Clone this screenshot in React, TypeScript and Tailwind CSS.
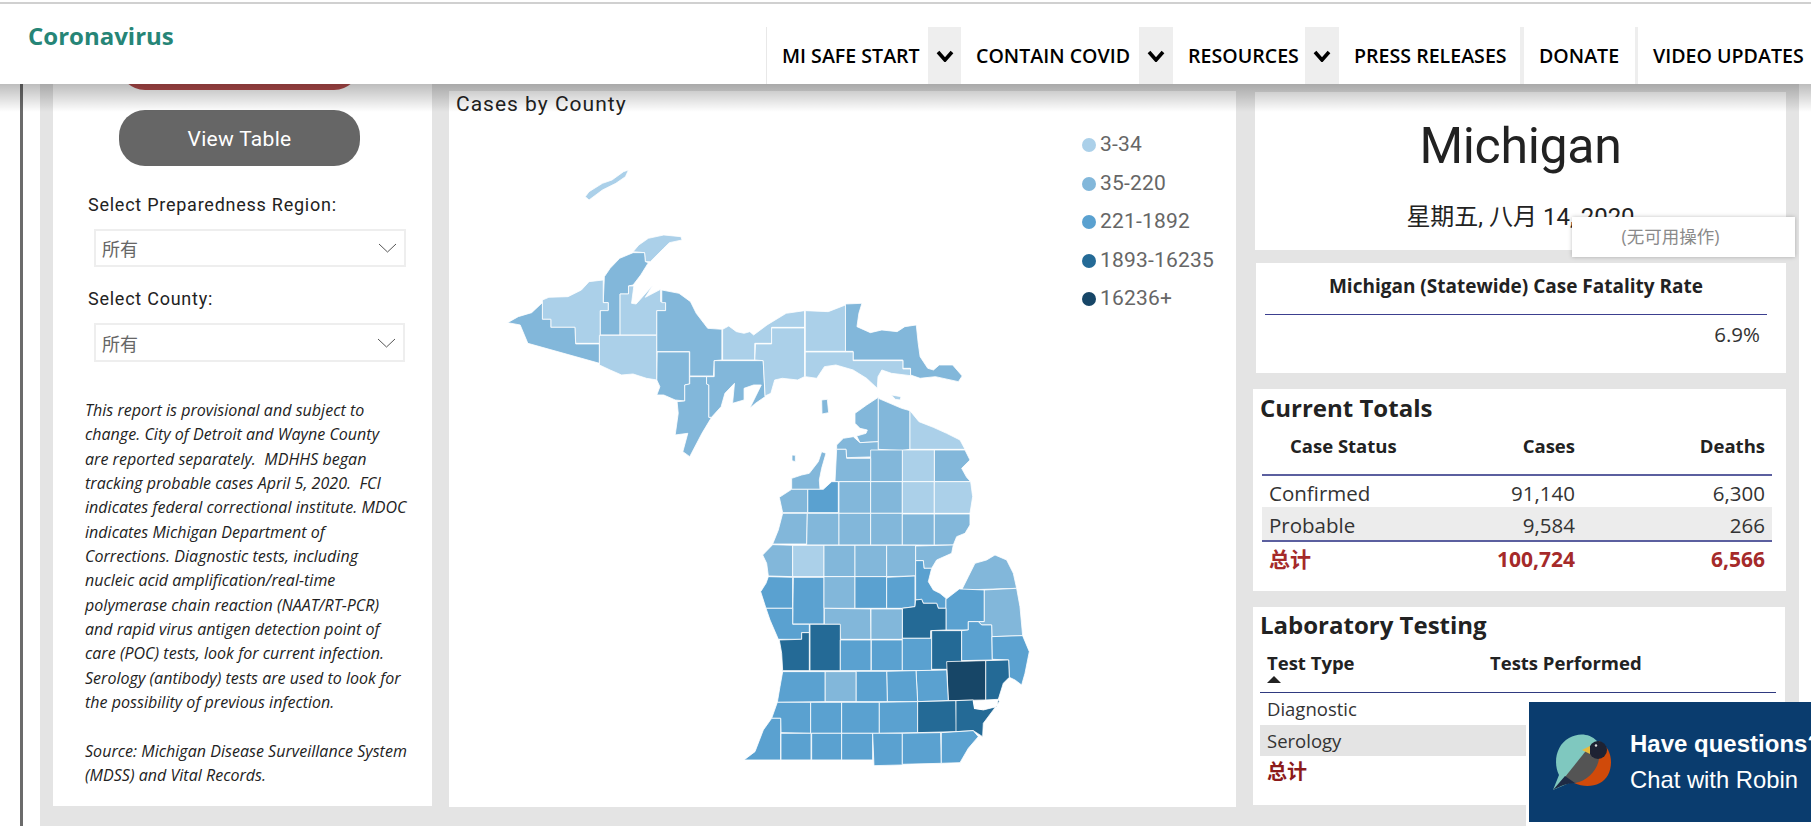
import React from "react";

const L1 = "#abd0e9";
const L2 = "#82b7da";
const L3 = "#5aa1d0";
const L4 = "#246a96";
const L5 = "#174667";

// upper peninsula, traced from a crop stretched 2.613 x 3
const upper: [string, string][] = [
  [L1, "275,140 285,125 320,100 345,90 375,65 388,60 380,80 355,100 320,120 285,150"],
  [L1, "400,305 415,285 440,265 480,255 525,260 528,270 495,278 480,295 445,335 432,335 430,308"],
  [L2, "400,308 430,308 432,335 440,338 420,375 400,405 388,408 388,432 366,432 366,555 314,555 314,482 335,480 335,458 322,458 325,380 340,355 365,325"],
  [L1, "322,390 322,458 335,458 335,482 314,482 314,580 250,580 248,532 185,532 185,508 163,508 163,450 180,442 230,440 265,420 285,395"],
  [L2, "163,458 163,508 185,508 185,532 248,532 250,582 312,582 312,640 125,580 105,525 72,518 100,500 135,488"],
  [L1, "366,432 388,432 388,408 402,408 396,460 408,462 425,440 452,405 432,442 472,418 472,455 485,458 485,482 462,482 462,555 366,555"],
  [L1, "312,556 462,556 462,690 435,685 400,672 370,675 340,660 312,645"],
  [L2, "475,420 520,430 550,455 565,490 585,520 595,535 632,538 632,630 612,632 610,678 548,678 548,605 462,605 462,482 485,482 485,458 475,458"],
  [L2, "463,606 547,606 547,702 535,705 535,753 510,750 480,735 462,735 470,710 462,690"],
  [L2, "548,680 592,680 592,702 598,705 598,802 605,802 580,850 548,920 530,905 543,850 510,855 518,790 515,755 535,753 535,705 548,702"],
  [L2, "612,632 740,632 745,740 720,760 705,775 735,705 715,705 690,715 690,750 660,760 665,700 640,730 630,770 605,802 598,802 598,705 592,702 592,680 612,680"],
  [L1, "634,538 650,528 670,545 690,550 705,545 715,555 750,525 800,490 848,482 848,532 762,532 762,580 718,580 718,630 634,630"],
  [L1, "720,582 762,582 762,534 848,534 848,680 830,690 790,685 770,690 760,730 745,738 740,632 718,630"],
  [L1, "850,482 910,485 955,465 955,604 850,604"],
  [L2, "955,462 998,460 990,490 985,530 1020,548 1050,540 1090,545 1110,530 1140,525 1145,580 1150,620 1170,655 1185,660 1200,645 1235,645 1260,678 1250,695 1190,680 1150,685 1125,675 1125,655 1105,655 1105,630 975,630 975,604 955,604"],
  [L1, "850,606 975,606 975,632 1105,632 1105,657 1125,657 1125,677 1075,670 1050,660 1040,680 1038,715 1010,685 975,660 930,645 900,650 880,685 850,680"],
  [L1, "1075,735 1100,740 1098,750 1085,748"],
];

// lower peninsula, traced from a 3 x 3 crop
const lower: [string, string][] = [
  [L2, "305,30 322,28 326,68 306,72"],
  [L2, "216,195 226,196 226,215 216,212"],
  [L2, "475,22 440,45 405,70 405,100 420,115 442,120 438,130 410,138 420,158 475,155"],
  [L2, "400,140 370,145 350,165 350,178 378,178 380,203 475,200 475,155 420,158"],
  [L2, "475,25 510,40 545,55 570,62 570,178 545,182 475,178"],
  [L1, "570,62 597,95 640,112 680,130 720,150 735,178 570,178"],
  [L2, "643,180 735,180 750,210 725,235 740,262 752,275 643,275"],
  [L1, "547,180 643,180 643,275 547,275"],
  [L2, "452,180 547,180 547,275 452,275"],
  [L2, "350,178 378,178 380,205 452,205 452,275 360,275 345,275"],
  [L2, "215,265 245,255 268,250 295,215 305,185 318,190 305,235 298,270 300,298 215,298"],
  [L3, "263,298 310,298 335,275 355,275 355,368 263,368"],
  [L2, "357,275 452,275 452,370 357,370"],
  [L2, "452,275 547,275 547,370 452,370"],
  [L1, "547,275 643,275 643,370 547,370"],
  [L1, "643,275 752,275 758,320 750,370 643,370"],
  [L2, "215,298 263,298 263,368 188,368 178,322"],
  [L2, "188,370 262,370 260,462 158,462 175,420"],
  [L2, "262,370 357,370 357,465 260,465"],
  [L2, "357,370 452,370 452,465 357,465"],
  [L2, "452,370 547,370 547,465 452,465"],
  [L2, "547,372 643,372 643,465 547,465"],
  [L2, "643,372 750,372 750,405 735,430 710,440 700,465 643,465"],
  [L2, "158,464 218,466 218,560 145,558 140,520 128,495"],
  [L1, "218,466 312,466 312,560 218,560"],
  [L2, "312,466 405,466 405,560 312,560"],
  [L2, "405,466 500,466 500,560 405,560"],
  [L2, "500,466 587,466 587,558 500,560"],
  [L2, "587,468 700,465 695,490 650,510 635,535 612,535 610,512 587,512"],
  [L3, "145,560 218,562 218,655 138,655 122,605 138,580"],
  [L3, "220,562 312,562 312,702 218,702"],
  [L2, "312,560 405,560 405,655 312,655"],
  [L3, "405,560 500,560 500,655 405,655"],
  [L3, "500,562 585,558 585,650 545,655 500,655"],
  [L3, "587,512 610,512 612,535 635,535 625,575 640,600 660,610 678,625 678,655 655,655 650,640 610,640 605,628 587,630 587,558"],
  [L2, "725,600 745,560 765,520 800,510 825,495 860,510 880,550 890,595 795,598"],
  [L3, "718,597 793,600 793,695 745,695 745,720 678,720 678,628"],
  [L2, "793,600 890,595 900,650 908,737 816,740 815,705 785,705 775,695 793,695"],
  [L4, "587,630 605,628 610,640 650,640 655,655 678,655 678,720 632,722 632,745 547,745 547,655 585,650"],
  [L2, "313,655 452,657 453,748 362,748 360,703 313,703"],
  [L2, "453,657 547,657 547,748 453,748"],
  [L3, "138,655 218,655 218,703 268,703 268,728 245,728 245,748 175,748 150,690"],
  [L4, "178,750 245,748 245,728 268,728 268,842 188,842 185,790"],
  [L4, "270,703 361,703 361,842 270,842"],
  [L3, "361,750 453,750 453,842 361,842"],
  [L3, "454,750 547,750 547,842 454,842"],
  [L3, "547,745 635,745 635,842 547,842"],
  [L4, "635,722 725,722 725,838 635,838"],
  [L3, "745,695 775,695 785,705 815,705 817,810 725,812 725,722 745,720"],
  [L3, "816,740 908,737 928,785 915,850 905,885 885,870 868,862 866,810 817,808"],
  [L4, "797,812 866,810 868,862 850,880 835,928 797,930"],
  [L5, "680,815 797,812 797,930 685,932"],
  [L3, "588,842 680,840 685,932 593,935"],
  [L3, "500,844 588,842 593,935 502,935"],
  [L3, "408,844 500,844 502,935 408,935"],
  [L2, "315,845 408,845 408,935 315,935"],
  [L3, "188,845 315,845 315,935 172,937 180,890"],
  [L3, "172,937 272,937 272,1030 183,1028 182,985 155,985"],
  [L3, "272,937 365,937 365,1030 272,1030"],
  [L3, "365,937 478,937 478,1030 365,1030"],
  [L3, "478,937 593,935 593,1028 478,1030"],
  [L4, "593,935 708,932 710,1025 593,1028"],
  [L4, "708,932 760,930 765,955 790,960 830,950 835,928 838,935 820,960 790,1000 788,1040 760,1022 708,1025"],
  [L3, "155,985 182,985 182,1110 72,1110 105,1085 130,1020"],
  [L3, "183,1030 273,1030 273,1110 183,1110"],
  [L3, "275,1030 365,1030 365,1110 275,1110"],
  [L3, "365,1030 458,1030 458,1110 365,1110"],
  [L3, "458,1030 547,1030 547,1125 462,1127"],
  [L3, "547,1030 662,1028 664,1120 547,1123"],
  [L3, "664,1028 760,1022 775,1040 745,1075 720,1118 664,1120"],
];

const legend = [
  [L1, "3-34"],
  [L2, "35-220"],
  [L3, "221-1892"],
  [L4, "1893-16235"],
  [L5, "16236+"],
];

const County = ({ fill, points }: { fill: string; points: string }) => (
  <polygon
    points={points}
    fill={fill}
    stroke="#ffffff"
    strokeOpacity={0.8}
    strokeWidth={1}
    vectorEffect="non-scaling-stroke"
    strokeLinejoin="round"
  />
);

const MichiganMap = () => (
  <svg className="absolute left-0 top-0 h-[716px] w-[787px]" viewBox="449 91 787 716">
    <g transform="translate(480 150) scale(0.3827 0.3333)">
      {upper.map(([fill, points]) => (
        <County key={points} fill={fill} points={points} />
      ))}
    </g>
    <g transform="translate(720 390) scale(0.3333)">
      {lower.map(([fill, points]) => (
        <County key={points} fill={fill} points={points} />
      ))}
      <path
        d="M760 932 L764 955 L785 958 L790 945 L810 950 L832 945"
        fill="none"
        stroke="#ffffff"
        strokeWidth={4}
      />
    </g>
  </svg>
);

const Chevron = () => (
  <svg width="18" height="12" viewBox="0 0 18 12">
    <path d="M2 2 L9 10 L16 2" fill="none" stroke="#000000" strokeWidth={3.6} />
  </svg>
);

const NavLink = ({ label, width }: { label: string; width: string }) => (
  <div className={`flex items-center pl-[15px] ${width}`}>
    <span className="text-[19.6px] font-semibold text-black whitespace-nowrap">{label}</span>
  </div>
);

const NavCaret = ({ width }: { width: string }) => (
  <div className={`flex items-center justify-center bg-[#eeeeee] ${width}`}>
    <Chevron />
  </div>
);

const SelectBox = ({ extra }: { extra: string }) => (
  <div className={`ml-[41px] flex items-center justify-between border-2 border-[#eeeeee] pl-[6px] pr-[7px] ${extra}`}>
    <span className="pt-[3px] text-[18px] text-[#666666]">所有</span>
    <svg width="19" height="10" viewBox="0 0 19 10">
      <path d="M1 1 L9.5 9 L18 1" fill="none" stroke="#555555" strokeWidth={1} />
    </svg>
  </div>
);

const Bird = () => (
  <svg className="shrink-0" width="58" height="58" viewBox="0 0 58 58">
    <path d="M0 57 L6 42 C0 30 3 12 16 5 C25 0 36 0 44 8 L30 44 Z" fill="#7fc8bf" />
    <path d="M46 8 C58 14 61 30 55 42 C49 53 34 56 21 50 C34 46 44 30 46 8 Z" fill="#d04a0a" />
    <path d="M36 14 L46 26 C44 38 34 48 22 50 C18 50 14 46 12 44 Z" fill="#545454" />
    <path d="M0 57 L12 43 L22 50 C14 50 8 53 0 57 Z" fill="#1e2a44" />
    <circle cx="45" cy="17" r="9" fill="#1e2233" />
    <circle cx="43" cy="12.5" r="1.2" fill="#dddddd" />
    <path d="M29 17 L37 13 L37 21 Z" fill="#e9b93c" />
  </svg>
);

const App = () => {
  return (
    <div className="relative h-[826px] w-[1811px] overflow-hidden bg-white font-['Open_Sans','Noto_Sans_CJK_SC',sans-serif]">
      <div className="mt-[2px] h-[2px] bg-[#d0d0d0]" />

      {/* header */}
      <div className="relative z-20 flex h-[80px] justify-between bg-white">
        <div className="pl-[28px] pt-[18px] text-[24px] leading-[28px] font-bold text-[#268577]">Coronavirus</div>
        <div className="mt-[23px] flex h-[57px] border-l border-[#e8e8e8]">
          <NavLink label="MI SAFE START" width="w-[161px]" />
          <NavCaret width="w-[33px]" />
          <NavLink label="CONTAIN COVID" width="w-[178px]" />
          <NavCaret width="w-[34px]" />
          <NavLink label="RESOURCES" width="w-[132px]" />
          <NavCaret width="w-[34px]" />
          <NavLink label="PRESS RELEASES" width="w-[181px]" />
          <div className="w-[4px] bg-[#eeeeee]" />
          <NavLink label="DONATE" width="w-[111px]" />
          <div className="w-[3px] bg-[#eeeeee]" />
          <NavLink label="VIDEO UPDATES" width="w-[173px]" />
        </div>
      </div>
      <div className="absolute left-0 right-0 top-[84px] z-10 h-[28px] bg-gradient-to-b from-black/[0.26] to-transparent" />

      {/* body */}
      <div className="flex h-[742px]">
        <div className="w-[40px] pl-[20px]">
          <div className="h-full w-[3px] bg-[#6b6b6b]" />
        </div>
        <div className="flex h-full w-[1759px] bg-[#e4e4e4] pl-[13px]">
          {/* left panel */}
          <div className="h-[722px] w-[379px] overflow-hidden bg-white">
            <div className="-mt-[50px] ml-[66px] h-[56px] w-[241px] rounded-[26px] bg-[#b54c4c]" />
            <div className="ml-[66px] mt-[20px] flex h-[56px] w-[241px] items-center justify-center rounded-[26px] bg-[#666666] pt-[4px] font-['Roboto',sans-serif] text-[21px] tracking-[0.3px] text-white">
              View Table
            </div>
            <div className="ml-[35px] mt-[27px] font-['Roboto',sans-serif] text-[18px] leading-[24px] tracking-[0.75px] text-[#222222]">Select Preparedness Region:</div>
            <SelectBox extra="mt-[12px] h-[38px] w-[312px]" />
            <div className="ml-[35px] mt-[20px] font-['Roboto',sans-serif] text-[18px] leading-[24px] tracking-[0.75px] text-[#222222]">Select County:</div>
            <SelectBox extra="mt-[12px] h-[39px] w-[311px]" />
            <div className="ml-[32px] mt-[36px] w-[345px] text-[16px] italic leading-[24.35px] tracking-[0.03px] text-[#222222]">
              <p>This report is provisional and subject to</p>
              <p>change. City of Detroit and Wayne County</p>
              <p>are reported separately.&nbsp; MDHHS began</p>
              <p>tracking probable cases April 5, 2020.&nbsp; FCI</p>
              <p>indicates federal correctional institute. MDOC</p>
              <p>indicates Michigan Department of</p>
              <p>Corrections. Diagnostic tests, including</p>
              <p>nucleic acid amplification/real-time</p>
              <p>polymerase chain reaction (NAAT/RT-PCR)</p>
              <p>and rapid virus antigen detection point of</p>
              <p>care (POC) tests, look for current infection.</p>
              <p>Serology (antibody) tests are used to look for</p>
              <p>the possibility of previous infection.</p>
              <p className="mt-[24.35px]">Source: Michigan Disease Surveillance System</p>
              <p>(MDSS) and Vital Records.</p>
            </div>
          </div>

          {/* map panel */}
          <div className="relative ml-[17px] mt-[7px] h-[716px] w-[787px] bg-white">
            <MichiganMap />
            <div className="relative pl-[7px] font-['Roboto','Noto_Sans',sans-serif] text-[21px] leading-[26px] tracking-[1px] text-[#222222]">
              Cases by County
            </div>
            <div className="absolute left-[633px] top-[41px] flex flex-col gap-[12.5px]">
              {legend.map(([color, label]) => (
                <div key={label} className="flex h-[26px] items-center gap-[4px]">
                  <div className="h-[14px] w-[14px] rounded-full" style={{ backgroundColor: color }} />
                  <span className="font-['Roboto','Noto_Sans',sans-serif] text-[21px] tracking-[0.2px] text-[#666666]">{label}</span>
                </div>
              ))}
            </div>
          </div>

          {/* right column */}
          <div className="ml-[17px] flex w-[533px] flex-col pt-[8px]">
            <div className="ml-[2px] flex h-[158px] w-[531px] flex-col items-center bg-white font-['Roboto','Noto_Sans','Noto_Sans_CJK_SC',sans-serif] text-[#222222]">
              <div className="mt-[19px] text-[50px] leading-[70px] tracking-[-0.3px]">Michigan</div>
              <div className="mt-[20px] text-[24px] leading-[32px]">星期五, 八月 14, 2020</div>
            </div>
            <div className="ml-[3px] mt-[13px] h-[110px] w-[530px] bg-white">
              <div className="pr-[10px] pt-[10px] text-center text-[19px] font-bold leading-[26px] text-[#222222]">
                Michigan (Statewide) Case Fatality Rate
              </div>
              <div className="ml-[9px] mt-[15px] h-[1px] w-[502px] bg-[#3c3f8f]" />
              <div className="pr-[26px] pt-[5px] text-right text-[20.5px] leading-[28px] text-[#333333]">6.9%</div>
            </div>

            <div className="mt-[16px] h-[202px] bg-white">
              <div className="pl-[7px] pt-[3px] text-[24px] font-bold leading-[32px] text-[#222222]">Current Totals</div>
              <div className="ml-[9px] w-[510px]">
                <div className="grid h-[52px] grid-cols-[141px_179px_190px] items-start border-b-2 border-[#5b5f9f] pt-[9px] text-[18.5px] font-bold leading-[26px] text-[#222222]">
                  <div className="pl-[28px]">Case Status</div>
                  <div className="pr-[7px] text-right">Cases</div>
                  <div className="pr-[7px] text-right">Deaths</div>
                </div>
                <div className="grid h-[31px] grid-cols-[141px_179px_190px] items-center pt-[2px] text-[20.5px] text-[#333333]">
                  <div className="pl-[7px]">Confirmed</div>
                  <div className="pr-[7px] text-right">91,140</div>
                  <div className="pr-[7px] text-right">6,300</div>
                </div>
                <div className="grid h-[35px] grid-cols-[141px_179px_190px] items-center border-b-2 border-[#5b5f9f] bg-[#ececec] pt-[3px] text-[20.5px] text-[#333333]">
                  <div className="pl-[7px]">Probable</div>
                  <div className="pr-[7px] text-right">9,584</div>
                  <div className="pr-[7px] text-right">266</div>
                </div>
                <div className="grid h-[34px] grid-cols-[141px_179px_190px] items-center pt-[1px] text-[21px] font-bold text-[#a52a2a]">
                  <div className="pl-[7px]">总计</div>
                  <div className="pr-[7px] text-right">100,724</div>
                  <div className="pr-[7px] text-right">6,566</div>
                </div>
              </div>
            </div>

            <div className="mt-[16px] h-[198px] w-[532px] bg-white">
              <div className="pl-[7px] pt-[2px] text-[24px] font-bold leading-[32px] text-[#222222]">Laboratory Testing</div>
              <div className="ml-[7px] w-[516px]">
                <div className="grid h-[52px] grid-cols-[222px_294px] border-b border-[#2f3a80] pt-[9px] text-[18.5px] font-bold leading-[26px] text-[#222222]">
                  <div className="pl-[7px]">
                    Test Type
                    <svg className="block" width="14" height="7" viewBox="0 0 14 7">
                      <path d="M0 7 L7 0 L14 7 Z" fill="#222222" />
                    </svg>
                  </div>
                  <div className="pl-[8px]">Tests Performed</div>
                </div>
                <div className="flex h-[32px] items-center pl-[7px] text-[18.5px] text-[#333333]">Diagnostic</div>
                <div className="flex h-[31px] items-center bg-[#e4e4e4] pl-[7px] text-[18.5px] text-[#333333]">Serology</div>
                <div className="flex h-[32px] items-center pl-[7px] text-[20px] font-bold text-[#8b1a1a]">总计</div>
              </div>
            </div>
          </div>
        </div>
      </div>

      {/* context menu */}
      <div className="absolute left-[1572px] top-[217px] z-30 flex h-[40px] w-[223px] items-center justify-center bg-white pb-[2px] pr-[26px] text-[17.5px] text-[#8a8a8a] shadow-[0_0_4px_rgba(0,0,0,0.25)]">
        (无可用操作)
      </div>

      {/* chat widget */}
      <div className="absolute bottom-0 right-0 z-30 flex h-[124px] w-[285px] items-center overflow-hidden border-b-4 border-l-[3px] border-white bg-[#0a3c6e] pl-[24px] font-['Liberation_Sans',sans-serif] text-white">
        <Bird />
        <div className="ml-[19px] whitespace-nowrap">
          <div className="text-[24px] font-bold leading-[36px]">Have questions?</div>
          <div className="text-[23.8px] leading-[36px]">Chat with Robin</div>
        </div>
      </div>
    </div>
  );
};

export default App;
